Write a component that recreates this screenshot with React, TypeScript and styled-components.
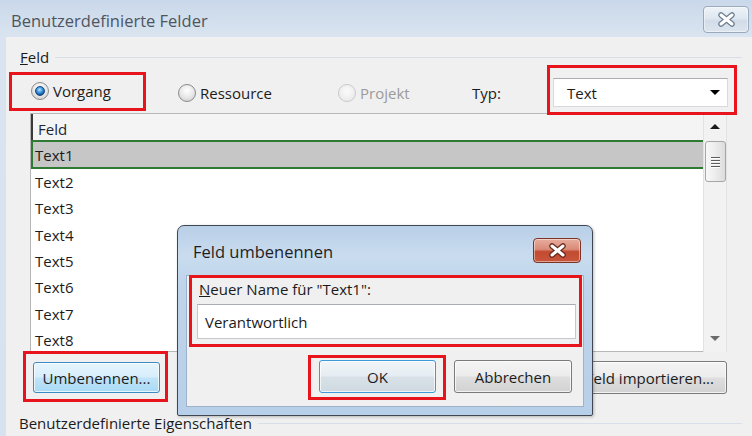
import React from "react";
import styled, { createGlobalStyle } from "styled-components";

const Global = createGlobalStyle`
  html, body { margin: 0; padding: 0; }
  body {
    width: 752px; height: 436px; overflow: hidden;
    background: #f0f0f0;
    font-family: "Open Sans", "Noto Sans", sans-serif;
  }
`;

const FONT = 15;

const Window = styled.div`
  position: relative;
  width: 752px;
  height: 436px;
  display: flex;
  flex-direction: column;
  background: linear-gradient(#c9d8ea, #dae4f0 36px, #d6e2ef);
  overflow: hidden;
  font-size: ${FONT}px;
  color: #1b1b1b;
`;

const TitleBar = styled.div`
  height: 37px;
  flex: none;
  display: flex;
  justify-content: space-between;
  align-items: flex-start;
  padding: 0 3px 0 11px;
`;

const TitleText = styled.div`
  font-size: 16.5px;
  line-height: 22px;
  margin-top: 10px;
  color: #4d5560;
`;

const CloseButton = styled.div<{ $red?: boolean }>`
  width: ${(p) => (p.$red ? 48 : 46)}px;
  height: ${(p) => (p.$red ? 25 : 27)}px;
  margin-top: ${(p) => (p.$red ? 12 : 6)}px;
  box-sizing: border-box;
  border-radius: 4px;
  display: flex;
  align-items: center;
  justify-content: center;
  border: 1px solid ${(p) => (p.$red ? "#7a3326" : "#9aa9bb")};
  background: ${(p) =>
    p.$red
      ? "linear-gradient(#e8ad9f, #d98a77 45%, #c24a30 55%, #c8573d)"
      : "linear-gradient(#eef3f8, #dfe7f0 45%, #d2dce8 55%, #dce5ef)"};
  box-shadow: inset 0 0 0 1px rgba(255, 255, 255, 0.45);
`;

const XIcon = ({ outline }: { outline: string }) => (
  <svg width="19" height="15" viewBox="0 0 19 15">
    <g strokeLinecap="round">
      <path d="M4 3 L15 12 M15 3 L4 12" stroke={outline} strokeWidth="5.5" />
      <path d="M4 3 L15 12 M15 3 L4 12" stroke="#ffffff" strokeWidth="3" />
    </g>
  </svg>
);

const Client = styled.div`
  flex: 1;
  margin-left: 6px;
  background: #f0f0f0;
  display: flex;
  flex-direction: column;
`;

const GroupHeader = styled.div<{ $top: number }>`
  display: flex;
  align-items: center;
  gap: 6px;
  height: 20px;
  margin-top: ${(p) => p.$top}px;
  padding-left: ${(p) => (p.$top > 10 ? 13 : 14)}px;
  padding-right: 10px;
  line-height: 20px;
  white-space: nowrap;
  &::after {
    content: "";
    flex: 1;
    height: 1px;
    background: #d7e0e8;
    margin-top: 1px;
  }
`;

const RadioRow = styled.div`
  height: 46px;
  display: flex;
  align-items: center;
  padding-left: 3px;
`;

const Highlight = styled.div<{
  $w: number;
  $h: number;
  $pad: string;
  $ml?: number;
  $mt?: number;
}>`
  position: relative;
  z-index: 2;
  box-sizing: border-box;
  width: ${(p) => p.$w}px;
  height: ${(p) => p.$h}px;
  padding: ${(p) => p.$pad};
  margin-left: ${(p) => p.$ml ?? 0}px;
  margin-top: ${(p) => p.$mt ?? 0}px;
  border: 3px solid #e8141b;
  display: flex;
  align-items: flex-start;
  flex: none;
`;

const Option = styled.div<{ $w: number; $disabled?: boolean }>`
  width: ${(p) => p.$w}px;
  flex: none;
  display: flex;
  align-items: center;
  gap: 4px;
  color: ${(p) => (p.$disabled ? "#9a9a9a" : "#1b1b1b")};
  line-height: 20px;
`;

const RadioCircle = styled.span<{ $checked?: boolean; $disabled?: boolean }>`
  width: 18px;
  height: 18px;
  box-sizing: border-box;
  border-radius: 50%;
  flex: none;
  border: 1px solid ${(p) => (p.$disabled ? "#c9c9c9" : "#8a8a8a")};
  background: ${(p) =>
    p.$disabled
      ? "radial-gradient(circle at 50% 40%, #fbfbfb, #ececec 70%)"
      : "radial-gradient(circle at 50% 35%, #ffffff, #e6e6e6 55%, #c9c9c9)"};
  display: flex;
  align-items: center;
  justify-content: center;
  &::after {
    content: "";
    display: ${(p) => (p.$checked ? "block" : "none")};
    width: 10px;
    height: 10px;
    box-sizing: border-box;
    border-radius: 50%;
    border: 1px solid #16457a;
    background: radial-gradient(circle at 45% 35%, #bfe6ff, #3a98e0 40%, #0c4a8e 80%);
  }
`;

const Label = styled.div<{ $w: number }>`
  width: ${(p) => p.$w}px;
  flex: none;
  line-height: 20px;
`;

const Combo = styled.div`
  width: 175px;
  height: 29px;
  box-sizing: border-box;
  margin-top: 10px;
  background: #fff;
  border: 1px solid #d6d9de;
  border-top-color: #abadb3;
  display: flex;
  align-items: center;
  justify-content: space-between;
  padding: 0 7px 0 13px;
`;

const Caret = styled.span<{ $grey?: boolean }>`
  width: 0;
  height: 0;
  border-left: 5px solid transparent;
  border-right: 5px solid transparent;
  border-top: 5px solid ${(p) => (p.$grey ? "#6b6b6b" : "#000")};
`;

const CaretUp = styled(Caret)`
  border-top: none;
  border-bottom: 5px solid #1a1a1a;
`;

const ListBox = styled.div`
  margin-left: 24px;
  width: 697px;
  height: 239px;
  display: flex;
  flex: none;
`;

const ListBody = styled.div`
  flex: 1;
  border: 1px solid #b7b7b7;
  border-right: none;
  background: #fff;
  overflow: hidden;
  display: flex;
  flex-direction: column;
`;

const HeaderCell = styled.div`
  height: 26px;
  flex: none;
  box-sizing: border-box;
  border-left: 2px solid #3a3a3a;
  padding-left: 5px;
  background: #f4f4f4;
  display: flex;
  align-items: center;
  padding-top: 4px;
  color: #1e2638;
`;

const Row = styled.div<{ $selected?: boolean }>`
  height: ${(p) => (p.$selected ? 29 : 26.33)}px;
  flex: none;
  box-sizing: border-box;
  display: flex;
  align-items: center;
  padding-left: ${(p) => (p.$selected ? 2 : 4)}px;
  background: ${(p) => (p.$selected ? "#c6c6c6" : "#fff")};
  border: ${(p) => (p.$selected ? "2px solid #2f7a32" : "none")};
  border-right: none;
  color: #1c1c1c;
`;

const Scrollbar = styled.div`
  width: 24px;
  flex: none;
  box-sizing: border-box;
  border-left: 1px solid #e2e2e2;
  border-right: 1px solid #e2e2e2;
  background: #f2f2f2;
  display: flex;
  flex-direction: column;
  align-items: center;
`;

const ScrollArrow = styled.div`
  height: 27px;
  display: flex;
  align-items: center;
  justify-content: center;
`;

const Thumb = styled.div`
  width: 21px;
  height: 41px;
  box-sizing: border-box;
  border: 1px solid #a6a6a6;
  border-radius: 3px;
  background: linear-gradient(90deg, #f8f8f8, #ececec 50%, #dcdcdc);
  display: flex;
  flex-direction: column;
  align-items: center;
  justify-content: center;
  gap: 2px;
  margin-top: 1px;
`;

const Grip = styled.span`
  width: 9px;
  height: 1px;
  background: #5d5d5d;
  box-shadow: 0 1px 0 #ffffff;
`;

const Spacer = styled.div`
  flex: 1;
`;

const ButtonRow = styled.div`
  display: flex;
  align-items: flex-start;
  justify-content: space-between;
  margin-top: -1px;
  padding-left: 17px;
  padding-right: 25px;
`;

const Button = styled.div<{ $w: number; $variant?: "hover" | "focus" }>`
  width: ${(p) => p.$w}px;
  height: 33px;
  flex: none;
  box-sizing: border-box;
  border-radius: 3px;
  display: flex;
  align-items: center;
  justify-content: center;
  white-space: nowrap;
  color: #1c1c1c;
  border: 1px solid
    ${(p) =>
      p.$variant === "hover" ? "#3c8bc4" : p.$variant === "focus" ? "#3c9ad8" : "#7a7a7a"};
  background: ${(p) =>
    p.$variant === "hover"
      ? "linear-gradient(#e6f5fd, #d6eefb 48%, #bfe4f9 52%, #a9d9f4)"
      : p.$variant === "focus"
      ? "linear-gradient(#f0f5f9, #e6edf2 48%, #d8e1e8 52%, #cfd9e1)"
      : "linear-gradient(#f4f4f4, #ececec 48%, #dedede 52%, #d2d2d2)"};
  box-shadow: inset 0 0 0 1px rgba(255, 255, 255, 0.7);
`;

const RightButton = styled(Button)`
  margin-top: 10px;
  justify-content: flex-end;
  padding-right: 12px;
`;

const Dialog = styled.div`
  position: absolute;
  left: 177px;
  top: 225px;
  width: 416px;
  height: 191px;
  box-sizing: border-box;
  border: 1px solid #3f4852;
  border-radius: 7px 7px 2px 2px;
  background: linear-gradient(#b9cfe7, #c9dcef 30px, #bed4ea 60px, #b7cfe8);
  box-shadow: 1px 1px 3px rgba(0, 0, 0, 0.25);
  display: flex;
  flex-direction: column;
  z-index: 5;
`;

const DialogTitle = styled.div`
  height: 49px;
  flex: none;
  display: flex;
  justify-content: space-between;
  align-items: flex-start;
  padding: 0 11px 0 15px;
`;

const DialogTitleText = styled.div`
  font-size: 16.5px;
  line-height: 22px;
  margin-top: 15px;
  color: #1e1e1e;
`;

const DialogClient = styled.div`
  flex: 1;
  margin: 0 8px 8px 8px;
  background: #f0f0f0;
  border: 1px solid #9db3cb;
  display: flex;
  flex-direction: column;
`;

const NameLabel = styled.div`
  line-height: 20px;
  height: 20px;
  padding-left: 5px;
`;

const Input = styled.div`
  height: 35px;
  box-sizing: border-box;
  margin-top: 5px;
  margin-left: 3px;
  width: 379px;
  background: #fff;
  border: 1px solid #c5c9ce;
  border-top-color: #a9adb3;
  display: flex;
  align-items: center;
  padding-left: 7px;
`;

const DialogButtons = styled.div`
  display: flex;
  justify-content: flex-end;
  align-items: flex-start;
  gap: 8px;
  margin-top: 8px;
  padding-right: 11px;
`;

const AbbrechenButton = styled(Button)`
  margin-top: 5px;
`;

const rows = ["Text2", "Text3", "Text4", "Text5", "Text6", "Text7", "Text8"];

export default function App() {
  return (
    <>
      <Global />
      <Window>
        <TitleBar>
          <TitleText>Benutzerdefinierte Felder</TitleText>
          <CloseButton>
            <XIcon outline="#6f7f93" />
          </CloseButton>
        </TitleBar>
        <Client>
          <GroupHeader $top={10}>
            <span>
              <u>F</u>eld
            </span>
          </GroupHeader>
          <RadioRow>
            <Highlight $w={137} $h={39} $pad="6px 0 0 19px" $mt={2}>
              <Option $w={100}>
                <RadioCircle $checked />
                <span>Vorgang</span>
              </Option>
            </Highlight>
            <Option $w={160} style={{ marginLeft: 32, marginTop: 5 }}>
              <RadioCircle />
              <span>Ressource</span>
            </Option>
            <Option $w={134} $disabled style={{ marginTop: 5 }}>
              <RadioCircle $disabled />
              <span>Projekt</span>
            </Option>
            <Label $w={75} style={{ marginTop: 5 }}>
              Typ:
            </Label>
            <Highlight $w={190} $h={50} $pad="0 0 0 3px">
              <Combo>
                <span>Text</span>
                <Caret />
              </Combo>
            </Highlight>
          </RadioRow>
          <ListBox>
            <ListBody>
              <HeaderCell>Feld</HeaderCell>
              <Row $selected>Text1</Row>
              {rows.map((r) => (
                <Row key={r}>{r}</Row>
              ))}
            </ListBody>
            <Scrollbar>
              <ScrollArrow>
                <CaretUp />
              </ScrollArrow>
              <Thumb>
                <Grip />
                <Grip />
                <Grip />
                <Grip />
              </Thumb>
              <Spacer />
              <ScrollArrow>
                <Caret $grey />
              </ScrollArrow>
            </Scrollbar>
          </ListBox>
          <ButtonRow>
            <Highlight $w={145} $h={51} $pad="8px 0 0 7px">
              <Button $w={127} $variant="hover" style={{ height: 31 }}>
                Umbenennen...
              </Button>
            </Highlight>
            <RightButton $w={150}>Feld importieren...</RightButton>
          </ButtonRow>
          <GroupHeader $top={11}>
            <span>Benutzerdefinierte Eigenschaften</span>
          </GroupHeader>
        </Client>
        <Dialog>
          <DialogTitle>
            <DialogTitleText>Feld umbenennen</DialogTitleText>
            <CloseButton $red>
              <XIcon outline="#6a2a1e" />
            </CloseButton>
          </DialogTitle>
          <DialogClient>
            <Highlight
              $w={393}
              $h={72}
              $pad="1px 0 0 2px"
              $ml={2}
              $mt={-1}
              style={{ flexDirection: "column" }}
            >
              <NameLabel>
                <u>N</u>euer Name für "Text1":
              </NameLabel>
              <Input>Verantwortlich</Input>
            </Highlight>
            <DialogButtons>
              <Highlight $w={138} $h={45} $pad="2px 0 0 8px">
                <Button $w={117} $variant="focus">
                  OK
                </Button>
              </Highlight>
              <AbbrechenButton $w={118}>Abbrechen</AbbrechenButton>
            </DialogButtons>
          </DialogClient>
        </Dialog>
      </Window>
    </>
  );
}
